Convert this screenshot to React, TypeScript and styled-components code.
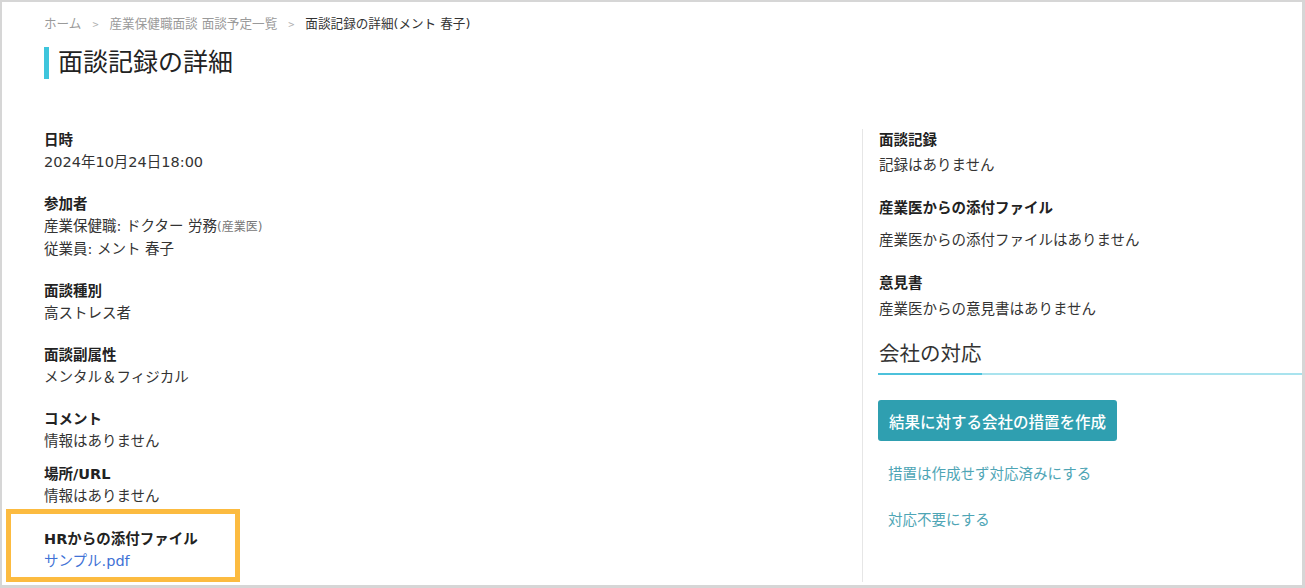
import React from "react";
import styled, { createGlobalStyle } from "styled-components";

const GlobalStyle = createGlobalStyle`
  html, body {
    margin: 0;
    padding: 0;
    background: #d6d6d6;
  }
  body {
    font-family: "DejaVu Sans", "Noto Sans CJK JP", sans-serif;
    color: #333;
  }
  * {
    box-sizing: border-box;
  }
`;

interface Field {
  label: string;
  values: React.ReactNode[];
  gap?: number;
}

function getLeftFields(): Field[] {
  return [
    { label: "日時", values: ["2024年10月24日18:00"] },
    {
      label: "参加者",
      values: [
        <>
          産業保健職: ドクター 労務<Small>(産業医)</Small>
        </>,
        "従業員: メント 春子",
      ],
    },
    { label: "面談種別", values: ["高ストレス者"] },
    { label: "面談副属性", values: ["メンタル＆フィジカル"] },
    { label: "コメント", values: ["情報はありません"], gap: 11 },
    { label: "場所/URL", values: ["情報はありません"], gap: 2 },
  ];
}

export default function App() {
  const leftFields = getLeftFields();
  return (
    <>
      <GlobalStyle />
      <Card>
        <Breadcrumb>
          <Crumb>ホーム</Crumb>
          <Sep>&gt;</Sep>
          <Crumb>産業保健職面談 面談予定一覧</Crumb>
          <Sep>&gt;</Sep>
          <Crumb $current>面談記録の詳細(メント 春子)</Crumb>
        </Breadcrumb>
        <Title>面談記録の詳細</Title>
        <Body>
          <LeftColumn>
            {leftFields.map((f) => (
              <Section key={f.label} $gap={f.gap ?? 20}>
                <Label>{f.label}</Label>
                {f.values.map((v, i) => (
                  <Value key={i}>{v}</Value>
                ))}
              </Section>
            ))}
            <Highlight>
              <Label>HRからの添付ファイル</Label>
              <FileLink href="#">サンプル.pdf</FileLink>
            </Highlight>
          </LeftColumn>
          <RightColumn>
            <Section $gap={21}>
              <Label>面談記録</Label>
              <Value $top={3}>記録はありません</Value>
            </Section>
            <Section $gap={21}>
              <Label>産業医からの添付ファイル</Label>
              <Value $top={10}>産業医からの添付ファイルはありません</Value>
            </Section>
            <Section $gap={19}>
              <Label>意見書</Label>
              <Value $top={4}>産業医からの意見書はありません</Value>
            </Section>
            <SubHeading>会社の対応</SubHeading>
            <PrimaryButton>結果に対する会社の措置を作成</PrimaryButton>
            <TextAction $top={22}>措置は作成せず対応済みにする</TextAction>
            <TextAction $top={24}>対応不要にする</TextAction>
          </RightColumn>
        </Body>
      </Card>
    </>
  );
}

const Card = styled.div`
  display: flex;
  flex-direction: column;
  margin: 2px 3px 3px 2px;
  height: 583px;
  background: #fff;
  padding: 12px 0 7px 42px;
`;

const Breadcrumb = styled.nav`
  display: flex;
  align-items: center;
  gap: 11px;
  height: 20px;
  font-size: 12.6px;
  line-height: 20px;
`;

const Crumb = styled.span<{ $current?: boolean }>`
  color: ${(p) => (p.$current ? "#333" : "#9a9a9a")};
`;

const Sep = styled.span`
  color: #b0b0b0;
  font-family: "Noto Sans CJK JP", sans-serif;
  font-size: 11px;
`;

const Title = styled.h1`
  margin: 13px 0 0;
  border-left: 5px solid #3ec5dc;
  padding-left: 9px;
  height: 32px;
  font-size: 25px;
  line-height: 32px;
  font-weight: 400;
  color: #222;
`;

const Body = styled.div`
  flex: 1;
  display: grid;
  grid-template-columns: 818px 1fr;
  margin-top: 50px;
`;

const LeftColumn = styled.div`
  display: flex;
  flex-direction: column;
`;

const RightColumn = styled.div`
  display: flex;
  flex-direction: column;
  align-items: flex-start;
  border-left: 1px solid #e6e6e6;
  padding-left: 16px;
`;

const Section = styled.div<{ $gap: number }>`
  display: flex;
  flex-direction: column;
  margin-bottom: ${(p) => p.$gap}px;
`;

const Label = styled.div`
  font-size: 14.5px;
  line-height: 22px;
  font-weight: 700;
  color: #222;
`;

const Value = styled.div<{ $top?: number }>`
  margin-top: ${(p) => p.$top ?? 0}px;
  font-size: 14.5px;
  line-height: 22px;
  color: #333;
`;

const Small = styled.span`
  font-size: 12px;
  color: #777;
`;

const Highlight = styled.div`
  display: flex;
  flex-direction: column;
  align-self: flex-start;
  width: 234px;
  margin-left: -38px;
  border: 5px solid #fcbb40;
  padding: 14px 0 5px 33px;
`;

const FileLink = styled.a`
  font-size: 14.5px;
  line-height: 22px;
  color: #3f72d6;
  text-decoration: none;
`;

const SubHeading = styled.h2`
  position: relative;
  align-self: stretch;
  margin: 0 0 0 -1px;
  padding: 0 0 4px 1px;
  font-size: 20.5px;
  line-height: 30px;
  font-weight: 400;
  color: #333;
  border-bottom: 2px solid #a9e3ee;

  &::after {
    content: "";
    position: absolute;
    left: 0;
    bottom: -2px;
    width: 104px;
    height: 2px;
    background: #4cc1db;
  }
`;

const PrimaryButton = styled.button`
  margin: 25px 0 0 -1px;
  width: 239px;
  height: 41px;
  border: none;
  border-radius: 3px;
  background: #2f9fb0;
  color: #fff;
  font-family: inherit;
  font-size: 15.5px;
  font-weight: 500;
  cursor: pointer;
`;

const TextAction = styled.a<{ $top: number }>`
  margin-top: ${(p) => p.$top}px;
  padding-left: 9px;
  font-size: 14.5px;
  line-height: 22px;
  color: #4ea5b5;
  text-decoration: none;
  cursor: pointer;
`;
